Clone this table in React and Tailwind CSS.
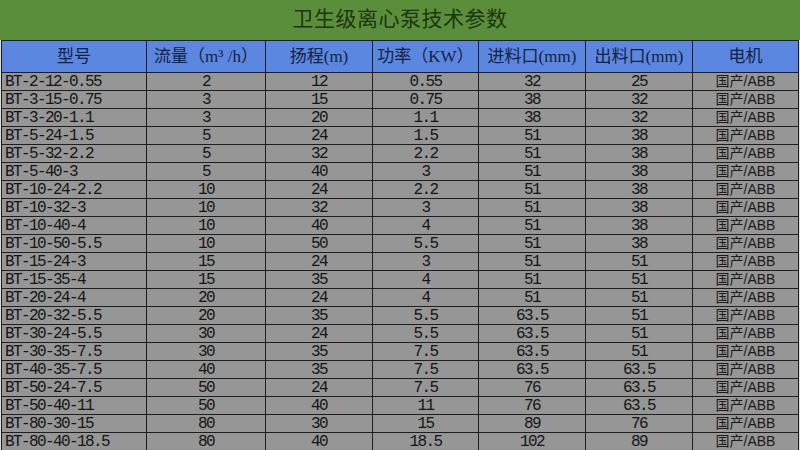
const rows = [
  ['BT-2-12-0.55', '2', '12', '0.55', '32', '25'],
  ['BT-3-15-0.75', '3', '15', '0.75', '38', '32'],
  ['BT-3-20-1.1', '3', '20', '1.1', '38', '32'],
  ['BT-5-24-1.5', '5', '24', '1.5', '51', '38'],
  ['BT-5-32-2.2', '5', '32', '2.2', '51', '38'],
  ['BT-5-40-3', '5', '40', '3', '51', '38'],
  ['BT-10-24-2.2', '10', '24', '2.2', '51', '38'],
  ['BT-10-32-3', '10', '32', '3', '51', '38'],
  ['BT-10-40-4', '10', '40', '4', '51', '38'],
  ['BT-10-50-5.5', '10', '50', '5.5', '51', '38'],
  ['BT-15-24-3', '15', '24', '3', '51', '51'],
  ['BT-15-35-4', '15', '35', '4', '51', '51'],
  ['BT-20-24-4', '20', '24', '4', '51', '51'],
  ['BT-20-32-5.5', '20', '35', '5.5', '63.5', '51'],
  ['BT-30-24-5.5', '30', '24', '5.5', '63.5', '51'],
  ['BT-30-35-7.5', '30', '35', '7.5', '63.5', '51'],
  ['BT-40-35-7.5', '40', '35', '7.5', '63.5', '63.5'],
  ['BT-50-24-7.5', '50', '24', '7.5', '76', '63.5'],
  ['BT-50-40-11', '50', '40', '11', '76', '63.5'],
  ['BT-80-30-15', '80', '30', '15', '89', '76'],
  ['BT-80-40-18.5', '80', '40', '18.5', '102', '89'],
];

const headers = ['型号', '流量（m³ /h）', '扬程(m)', '功率（KW）', '进料口(mm)', '出料口(mm)', '电机'];

const cjk = "font-['Liberation_Serif','Noto_Sans_CJK_SC',serif]";
const mono = "font-['Liberation_Mono',monospace] tracking-[-1.6px]";

export default function App() {
  return (
    <div className="w-[800px] h-[450px] overflow-hidden bg-[#dcdcdc]">
      {/* title band */}
      <div className="h-[40px] bg-[#5b8e3a] flex items-center justify-center">
        <span className={`${cjk} text-[21px] text-[#1a3510] tracking-[0.5px]`}>卫生级离心泵技术参数</span>
      </div>

      <div className="ml-px w-[798px] bg-[#1e1e1e] p-px grid grid-cols-[144px_118px_106px_105px_106px_106px_105px] gap-px">
        {headers.map((h) => (
          <div key={h} className={`h-[31px] bg-[#5b87e0] flex items-center justify-center ${cjk} text-[17px] text-[#16213f]`}>
            <span className="whitespace-pre">{h}</span>
          </div>
        ))}

        {rows.map((r) => (
          <Row key={r[0]} r={r} />
        ))}
      </div>
    </div>
  );
}

function Row({ r }) {
  return (
    <>
      <div className={`h-[17px] bg-[#969696] flex items-center pl-[3px] ${mono} text-[16px] text-[#151515]`}>{r[0]}</div>
      {r.slice(1).map((v, i) => (
        <div key={i} className={`h-[17px] bg-[#969696] flex items-center justify-center ${mono} text-[16px] text-[#151515]`}>
          {v}
        </div>
      ))}
      <div className="h-[17px] bg-[#969696] flex items-center justify-center font-['Liberation_Sans','Noto_Sans_CJK_SC',sans-serif] text-[14px] text-[#1a1a1a]">
        国产/ABB
      </div>
    </>
  );
}
